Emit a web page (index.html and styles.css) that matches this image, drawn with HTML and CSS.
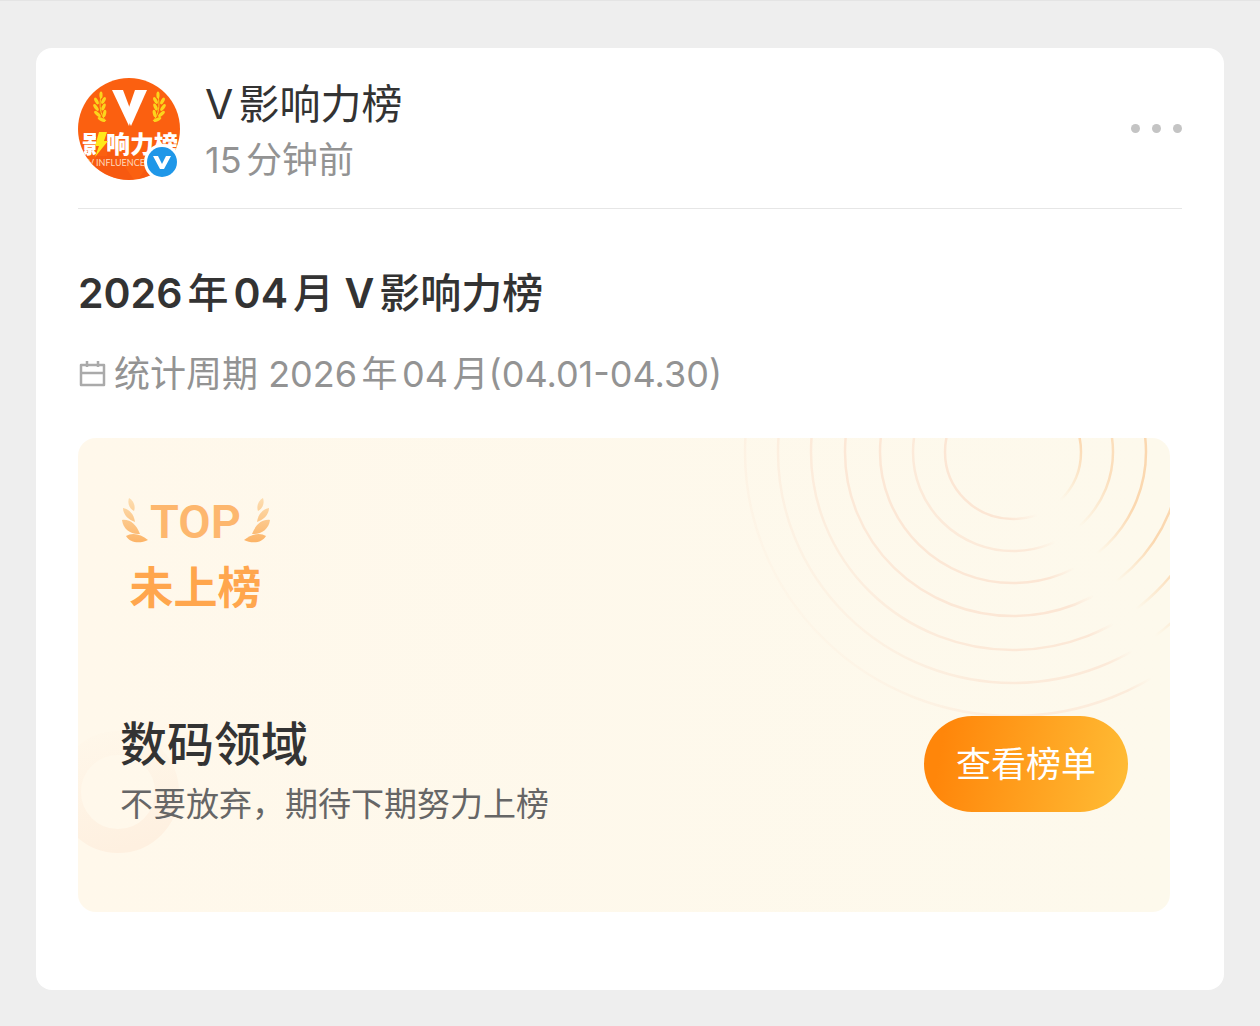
FILE: index.html
```html
<!DOCTYPE html>
<html lang="zh-CN">
<head>
    <meta charset="UTF-8">
    <meta name="viewport" content="width=device-width, initial-scale=1.0">
    <title>V影响力榜</title>
    <link rel="stylesheet" href="styles.css">
</head>
<body>

<article class="card">
    <header class="card-header">
        <div class="avatar">
            <svg viewBox="0 0 102 102" aria-hidden="true">
                <defs>
                    <clipPath id="avatarClip"><circle cx="51" cy="51" r="51"/></clipPath>
                    <g id="wheat">
                        <path d="M28 43C22 37 21 27 23 18" fill="none" stroke="#fbd51c" stroke-width="1"/>
                        <ellipse cx="23" cy="17" rx="1.6" ry="3.6"/>
                        <ellipse cx="18.5" cy="23" rx="1.7" ry="3.8" transform="rotate(-28 18.5 23)"/>
                        <ellipse cx="25.5" cy="22.5" rx="1.7" ry="3.8" transform="rotate(28 25.5 22.5)"/>
                        <ellipse cx="18" cy="29.5" rx="1.7" ry="4" transform="rotate(-36 18 29.5)"/>
                        <ellipse cx="25.5" cy="29" rx="1.7" ry="3.8" transform="rotate(24 25.5 29)"/>
                        <ellipse cx="19.5" cy="36" rx="1.7" ry="4.2" transform="rotate(-48 19.5 36)"/>
                        <ellipse cx="26.5" cy="35.5" rx="1.7" ry="3.8" transform="rotate(12 26.5 35.5)"/>
                        <ellipse cx="23.5" cy="41.5" rx="1.7" ry="4.2" transform="rotate(-62 23.5 41.5)"/>
                    </g>
                </defs>
                <g clip-path="url(#avatarClip)">
                    <rect width="102" height="102" fill="#fb6010"/>
                    <path d="M0 34L26 0H0zM102 30L78 0h24zM0 102l30-38 26 38zM60 102l22-34 20 34z" fill="#f4520f" opacity=".5"/>
                    <use href="#wheat" fill="#fbd51c"/>
                    <use href="#wheat" fill="#fbd51c" transform="matrix(-1 0 0 1 103 0)"/>
                    <path d="M34 12h11l9 24-3 12z" fill="#fff"/>
                    <path d="M57 12h12L53 48l-5-10z" fill="#fff"/>
                    <text class="avatar-name" x="4" y="75">影响力榜</text>
                    <path d="M18 53h11v25H18z" fill="#fb6010"/>
                    <path d="M21 54h8l-3 9h4L17 79l4-11h-4z" fill="#ffe81a"/>
                    <text class="avatar-latin" x="10" y="88">V INFLUENCE</text>
                </g>
            </svg>
            <svg class="badge" viewBox="0 0 36 36" aria-hidden="true">
                <circle cx="18" cy="18" r="18" fill="#fff"/>
                <circle cx="18" cy="18" r="15" fill="#1f97e8"/>
                <path d="M9 12h5l4 8 4-8h5l-7 13h-4z" fill="#fff"/>
            </svg>
        </div>
        <div class="author">
            <h2 class="author-name">V影响力榜</h2>
            <time class="author-time">15分钟前</time>
        </div>
        <button class="more" type="button" aria-label="更多">
            <span class="dot"></span>
            <span class="dot"></span>
            <span class="dot"></span>
        </button>
    </header>

    <h1 class="title">2026年04月 V影响力榜</h1>
    <p class="period">
        <svg class="calendar" viewBox="0 0 28 28" aria-hidden="true">
            <path d="M3 5h23v20H3zM3 13h23M9 1v6M20 1v6" fill="none" stroke="#aaa" stroke-width="2.5" stroke-linejoin="round"/>
        </svg>
        <span>统计周期 2026年04月(04.01-04.30)</span>
    </p>

    <section class="rank">
        <!-- Rings in the top right corner, faded out along the diagonal -->
        <svg class="rings" viewBox="0 0 440 300" aria-hidden="true">
            <defs>
                <linearGradient id="ringStroke" gradientUnits="userSpaceOnUse" x1="63" y1="168" x2="503" y2="-140">
                    <stop offset="0" stop-color="#fce6d4" stop-opacity=".2"/>
                    <stop offset=".22" stop-color="#fce6d4" stop-opacity=".9"/>
                    <stop offset=".42" stop-color="#fce6d4"/>
                    <stop offset=".47" stop-color="#fce6d4" stop-opacity="0"/>
                    <stop offset=".52" stop-color="#fbd8b0" stop-opacity="0"/>
                    <stop offset=".62" stop-color="#fbd8b0"/>
                    <stop offset="1" stop-color="#fbd8b0"/>
                </linearGradient>
            </defs>
            <g fill="none" stroke="url(#ringStroke)" stroke-width="2.5">
                <ellipse cx="283" cy="14" rx="68" ry="67"/>
                <ellipse cx="283" cy="14" rx="100" ry="99" opacity=".8"/>
                <ellipse cx="283" cy="14" rx="133" ry="131"/>
                <ellipse cx="283" cy="14" rx="168" ry="164"/>
                <ellipse cx="283" cy="14" rx="202" ry="198" opacity=".9"/>
                <ellipse cx="283" cy="14" rx="235" ry="231" opacity=".8"/>
                <ellipse cx="283" cy="14" rx="268" ry="264" opacity=".7"/>
            </g>
        </svg>
        <!-- Thick ring at the left edge -->
        <svg class="halo" viewBox="0 0 104 128" aria-hidden="true">
            <defs>
                <linearGradient id="haloStroke" gradientUnits="userSpaceOnUse" x1="20" y1="2" x2="50" y2="120">
                    <stop offset="0" stop-color="#fef0e0" stop-opacity=".1"/>
                    <stop offset="1" stop-color="#fef0e0"/>
                </linearGradient>
            </defs>
            <circle cx="40" cy="64" r="49" fill="none" stroke="url(#haloStroke)" stroke-width="24"/>
        </svg>

        <div class="emblem">
            <div class="emblem-top">
                <svg class="laurel" viewBox="0 0 28 48" aria-hidden="true">
                    <defs>
                        <linearGradient id="leafFill" gradientUnits="userSpaceOnUse" x1="0" y1="2" x2="0" y2="46">
                            <stop offset="0" stop-color="#fddcae"/>
                            <stop offset="1" stop-color="#fcb264"/>
                        </linearGradient>
                        <g id="leaves" fill="url(#leafFill)">
                            <path d="M9 0c4 2 7 8 5 13C10 11 7 6 9 0z"/>
                            <path d="M3 10c6 1 11 6 12 14C9 22 3 17 3 10z"/>
                            <path d="M2 22c8-1 14 4 18 14C11 37 3 31 2 22z"/>
                            <path d="M6 38c6-4 15-2 22 4-8 4-18 3-22-4z"/>
                        </g>
                    </defs>
                    <use href="#leaves"/>
                </svg>
                <span class="emblem-word">TOP</span>
                <svg class="laurel" viewBox="0 0 28 48" aria-hidden="true">
                    <use href="#leaves" transform="matrix(-1 0 0 1 29 0)"/>
                </svg>
            </div>
            <strong class="emblem-status">未上榜</strong>
        </div>

        <div class="rank-footer">
            <div class="rank-text">
                <h3 class="rank-field">数码领域</h3>
                <p class="rank-note">不要放弃，期待下期努力上榜</p>
            </div>
            <button class="view-button" type="button">查看榜单</button>
        </div>
    </section>
</article>

</body>
</html>
```
FILE: styles.css
```css
* {
    box-sizing: border-box;
}
body {
    margin: 0;
    padding: 47px 36px 36px;
    border-top: 1px solid #e4e4e4;
    background-color: #eee;
    color: #333;
    font-family: Inter, "Noto Sans CJK SC", sans-serif;
    text-autospace: normal;
}
h1, h2, h3, p {
    margin: 0;
}
button {
    border: none;
    font-family: inherit;
    cursor: pointer;
}
.card {
    padding: 28px 42px 78px;
    border-radius: 16px;
    background-color: #fff;
}

/* Author row */
.card-header {
    display: flex;
    align-items: flex-start;
    padding-bottom: 20px;
    border-bottom: 1px solid #e6e6e6;
}
.avatar {
    position: relative;
    width: 102px;
    height: 102px;
    margin: 2px 25px 0 0;
}
.avatar svg {
    display: block;
}
.avatar-name {
    fill: #fff;
    font-size: 24px;
    font-weight: 900;
}
.avatar-latin {
    fill: #ffd9bd;
    font-family: Lato, sans-serif;
    font-size: 9px;
}
.avatar .badge {
    position: absolute;
    right: 0;
    bottom: 0;
    width: 36px;
    height: 36px;
}
.author {
    flex: 1;
}
.author-name {
    font-size: 41px;
    font-weight: 400;
    line-height: 56px;
}
.author-time {
    display: block;
    color: #939393;
    font-size: 36px;
    line-height: 56px;
}
.more {
    display: flex;
    align-items: center;
    gap: 12px;
    height: 104px;
    padding: 0;
    background: none;
}
.dot {
    width: 9px;
    height: 9px;
    border-radius: 50%;
    background-color: #c4c4c4;
}

/* Heading and period */
.title {
    margin-top: 56px;
    font-family: Inter, "Noto Sans CJK SC Medium", "Noto Sans CJK SC", sans-serif;
    font-size: 41px;
    font-weight: 600;
    font-synthesis: none;
    line-height: 56px;
}
.period {
    display: flex;
    align-items: center;
    gap: 8px;
    margin-top: 29px;
    color: #939393;
    font-size: 36px;
    line-height: 48px;
}
.calendar {
    width: 28px;
    height: 28px;
}

/* Rank panel */
.rank {
    position: relative;
    overflow: hidden;
    margin: 40px 12px 0 0;
    padding: 56px 42px 80px;
    border-radius: 18px;
    background: linear-gradient(90deg, #fff8eb, #fdf9ec);
}
.rings {
    position: absolute;
    top: 0;
    right: 0;
    width: 440px;
    height: 300px;
}
.halo {
    position: absolute;
    bottom: 56px;
    left: 0;
    width: 104px;
    height: 128px;
}
.emblem {
    position: relative;
    display: inline-flex;
    flex-direction: column;
    align-items: center;
    gap: 8px;
}
.emblem-top {
    display: flex;
    align-items: center;
    gap: 2px;
    height: 56px;
}
.laurel {
    width: 28px;
    height: 48px;
}
.emblem-word {
    color: #fdb76e;
    font-family: Roboto, sans-serif;
    font-size: 47px;
    font-weight: 600;
    line-height: 56px;
}
.emblem-status {
    color: #ffa64d;
    font-size: 44px;
    font-weight: 700;
    line-height: 60px;
}
.rank-footer {
    position: relative;
    display: flex;
    align-items: flex-start;
    justify-content: space-between;
    margin-top: 94px;
}
.rank-field {
    font-size: 47px;
    font-weight: 500;
    line-height: 64px;
}
.rank-note {
    color: #666;
    font-size: 33px;
    line-height: 56px;
}
.view-button {
    margin-top: 4px;
    padding: 0 32px;
    border-radius: 48px;
    background: linear-gradient(100deg, #ff860a 10%, #ffba33 95%);
    color: #fff;
    font-size: 35px;
    line-height: 96px;
}
```
